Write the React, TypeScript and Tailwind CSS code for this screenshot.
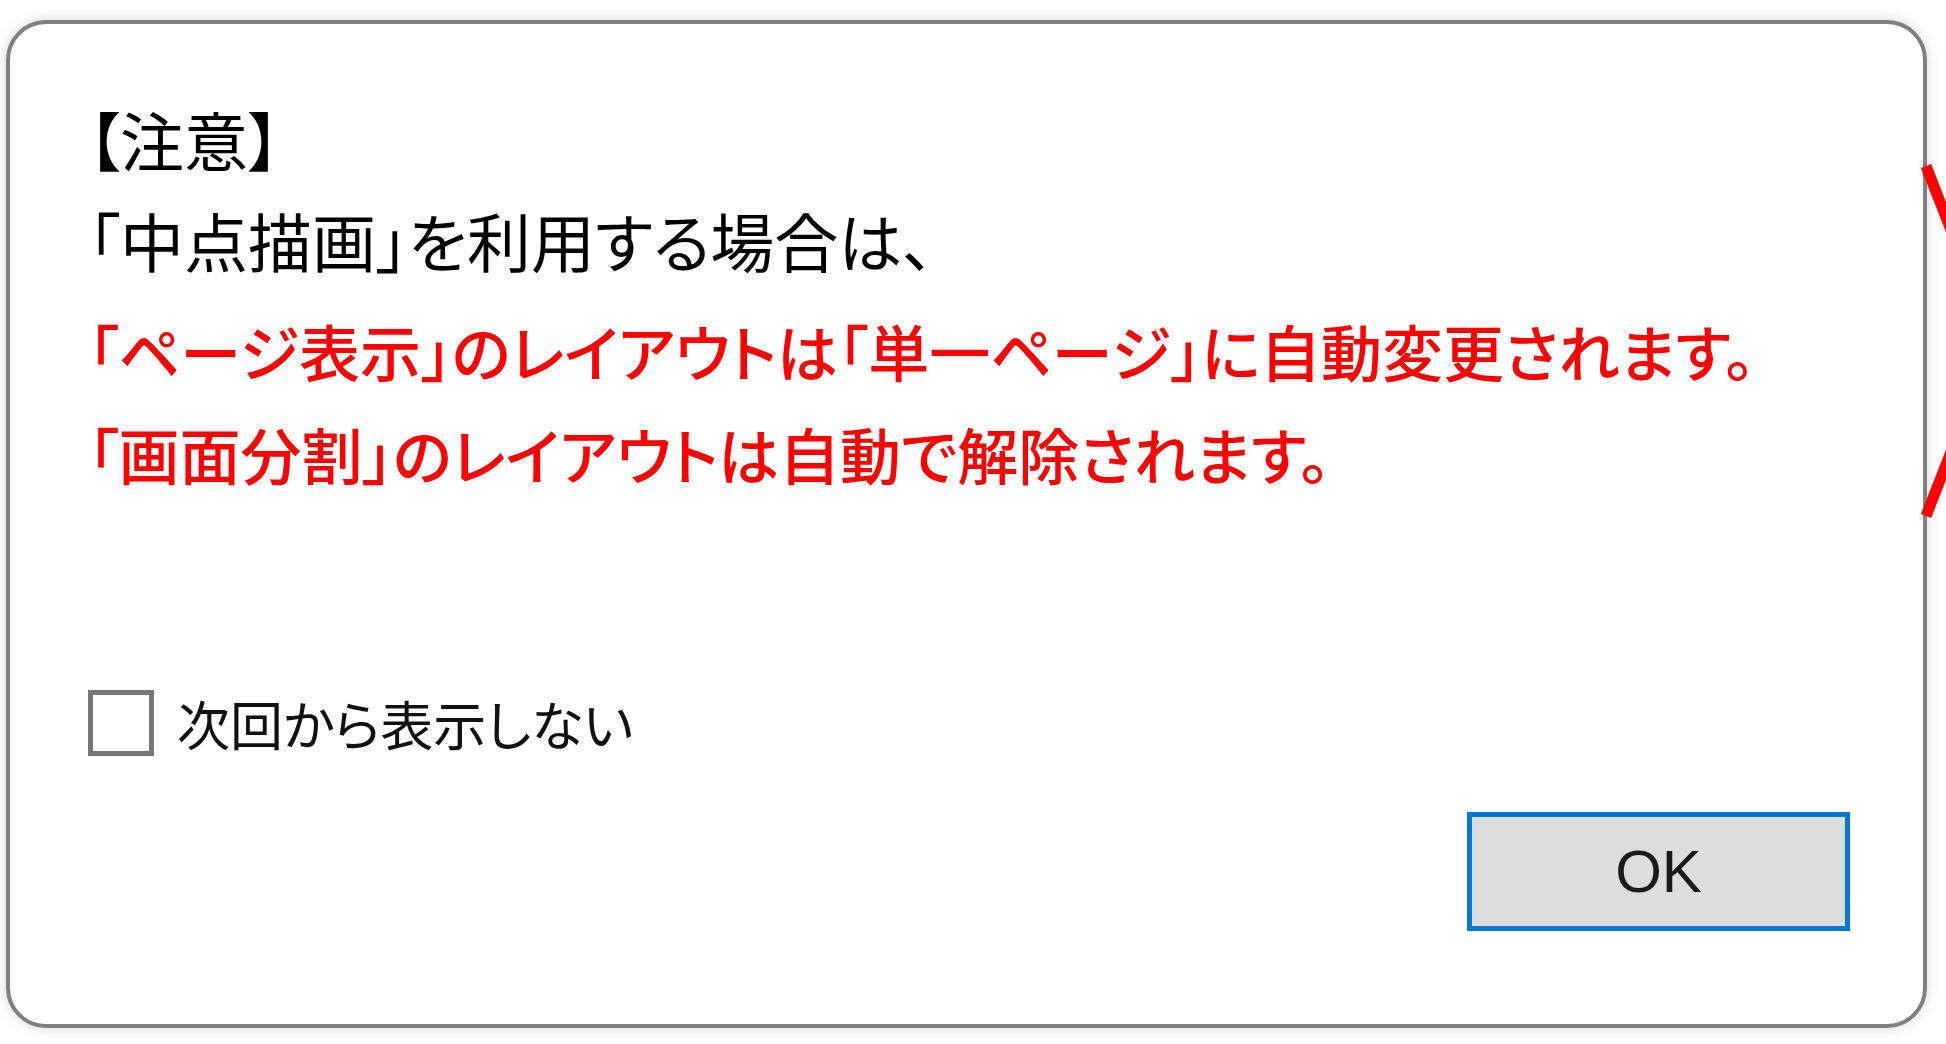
import React from "react";

function RedMarks() {
  return (
    <svg className="absolute left-0 top-0 pointer-events-none" width="1946" height="1044" viewBox="0 0 1946 1044">
      <path d="M1926 166 L1951 230" stroke="#ff0000" strokeWidth="11" strokeLinecap="butt" />
      <path d="M1926 516 L1951 452" stroke="#ff0000" strokeWidth="11" strokeLinecap="butt" />
    </svg>
  );
}

export default function App() {
  return (
    <div className="relative w-[1946px] h-[1044px] overflow-hidden bg-white pl-[6px] pt-[20px] font-['Noto_Sans_CJK_JP',sans-serif] [font-feature-settings:'palt']">
      <div className="w-[1921px] h-[1008px] rounded-[40px] border-4 border-[#808080] bg-white shadow-[0_0_14px_rgba(0,0,0,0.16)] flex flex-col pl-[78px] pr-[73px] pt-[64px]">
        <div className="text-[64px] leading-[101px] text-black whitespace-nowrap">
          <p>【注意】</p>
          <p>「中点描画」を利用する場合は、</p>
        </div>

        <div className="mt-[9px] text-[61px] leading-[103px] text-[#ff0000] font-medium whitespace-nowrap">
          <p>「ページ表示」のレイアウトは「単一ページ」に自動変更されます。</p>
          <p>「画面分割」のレイアウトは自動で解除されます。</p>
        </div>

        <label className="mt-[185px] flex items-center gap-[23px]">
          <span className="w-[66px] h-[66px] border-[5px] border-[#777777] bg-white" />
          <span className="text-[53px] leading-none text-[#111111]">次回から表示しない</span>
        </label>

        <div className="mt-[56px] flex justify-end">
          <button className="w-[383px] h-[119px] border-[5px] border-[#0078d7] bg-[#dddddd] text-[60px] text-[#1a1a1a] font-['Liberation_Sans',sans-serif] flex items-center justify-center">
            OK
          </button>
        </div>
      </div>
      <RedMarks />
    </div>
  );
}
